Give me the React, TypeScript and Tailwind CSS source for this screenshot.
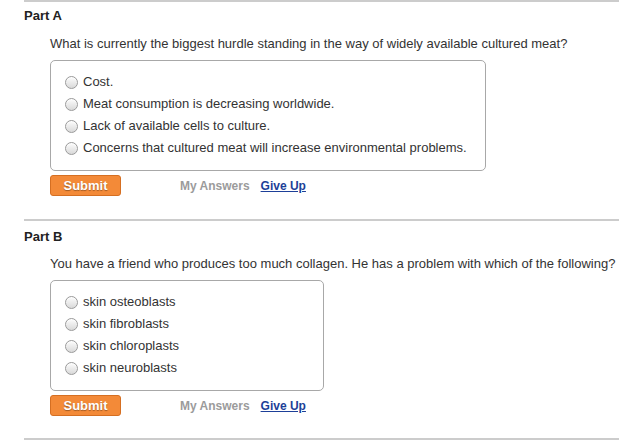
import React from 'react';

interface PartProps {
    label: string;
    question: string;
    options: string[];
    boxWidth: string;
    headTop: string;
    questionTop: string;
}

function Radio() {
    return (
        <span className="inline-block w-[13px] h-[13px] rounded-full border border-[#9a9a9a] bg-gradient-to-b from-[#fdfdfd] to-[#d9d9d9] shadow-[inset_0_1px_1px_rgba(255,255,255,0.8)] shrink-0" />
    );
}

function Part({ label, question, options, boxWidth, headTop, questionTop }: PartProps) {
    return (
        <div className="border-t-2 border-[#cccccc] h-[219px]">
            <h2 className={`${headTop} text-[13px] leading-[16px] font-bold text-[#222]`}>{label}</h2>
            <div className="pl-[26px]">
                <p className={`${questionTop} text-[13px] leading-[16px] text-[#333]`}>{question}</p>
                <div className={`mt-[8px] border border-[#a8a8a8] rounded-[5px] pt-[10px] pb-[11px] pl-[14px] ${boxWidth}`}>
                    {options.map((opt, i) => (
                        <label key={i} className="flex items-center h-[22px] gap-[5px] text-[13px] text-[#333]">
                            <Radio />
                            <span>{opt}</span>
                        </label>
                    ))}
                </div>
                <div className="mt-[4px] flex items-center">
                    <button className="w-[71px] h-[21px] rounded-[3px] bg-[#f38a38] border border-[#d56f22] text-white text-[13px] font-bold leading-none [text-shadow:0_1px_1px_rgba(0,0,0,0.35)]">
                        Submit
                    </button>
                    <span className="ml-[59px] text-[12px] font-bold text-[#9b9b9b]">My Answers</span>
                    <a className="ml-[11px] text-[12px] font-bold text-[#1d3f98] underline">Give Up</a>
                </div>
            </div>
        </div>
    );
}

export default function App() {
    return (
        <div className="w-[632px] h-[440px] bg-white overflow-hidden font-['Liberation_Sans',Arial,sans-serif]">
            <div className="ml-[24px] w-[595px]">
                <Part
                    label="Part A"
                    question="What is currently the biggest hurdle standing in the way of widely available cultured meat?"
                    options={[
                        'Cost.',
                        'Meat consumption is decreasing worldwide.',
                        'Lack of available cells to culture.',
                        'Concerns that cultured meat will increase environmental problems.',
                    ]}
                    boxWidth="w-[436px]"
                    headTop="mt-[6px]"
                    questionTop="mt-[12px]"
                />
                <Part
                    label="Part B"
                    question="You have a friend who produces too much collagen. He has a problem with which of the following?"
                    options={[
                        'skin osteoblasts',
                        'skin fibroblasts',
                        'skin chloroplasts',
                        'skin neuroblasts',
                    ]}
                    boxWidth="w-[274px]"
                    headTop="mt-[8px]"
                    questionTop="mt-[11px]"
                />
                <div className="border-t-2 border-[#cccccc]" />
            </div>
        </div>
    );
}
